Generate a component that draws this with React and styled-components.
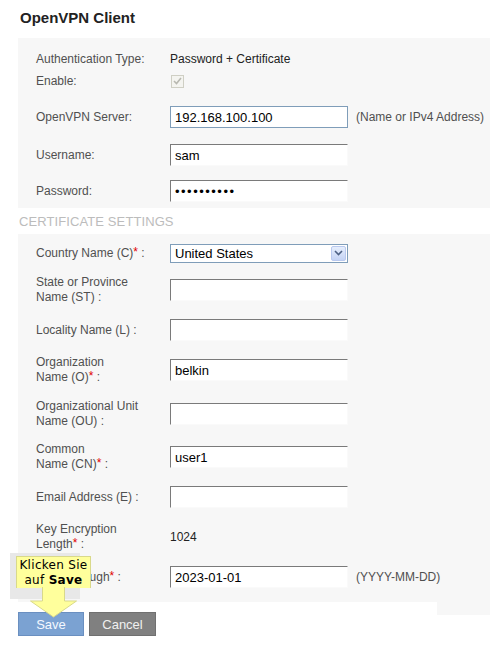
import styled, { createGlobalStyle } from "styled-components";

const GlobalStyle = createGlobalStyle`
    body {
        margin: 0;
        background: #fff;
        font-family: "Liberation Sans", Arial, sans-serif;
    }
`;

const App = () => {
    return (
        <Page>
            <GlobalStyle />
            <Title>OpenVPN Client</Title>

            <Panel $mt={10} $pt={10} $pb={6}>
                <Row $h={22}>
                    <Label>Authentication Type:</Label>
                    <Value>Password + Certificate</Value>
                </Row>
                <Row $h={22}>
                    <Label>Enable:</Label>
                    <Check>
                        <svg width="9" height="8" viewBox="0 0 9 8">
                            <path d="M1 4 L3.5 6.5 L8 1" fill="none" stroke="#b8b8b0" strokeWidth="1.6" />
                        </svg>
                    </Check>
                </Row>
                <Row $h={22} $mt={14}>
                    <Label>OpenVPN Server:</Label>
                    <Input $focus defaultValue="192.168.100.100" />
                    <Hint>(Name or IPv4 Address)</Hint>
                </Row>
                <Row $h={22} $mt={16}>
                    <Label>Username:</Label>
                    <Input defaultValue="sam" />
                </Row>
                <Row $h={22} $mt={14}>
                    <Label>Password:</Label>
                    <Input $secret type="password" defaultValue="xxxxxxxxxx" />
                </Row>
            </Panel>

            <SectionTitle>CERTIFICATE SETTINGS</SectionTitle>

            <Panel $mt={0} $pt={8} $pb={14}>
                <Row $h={22}>
                    <Label>Country Name (C)<Req>*</Req> :</Label>
                    <Select>
                        <span>United States</span>
                        <SelectArrow>
                            <svg width="9" height="6" viewBox="0 0 9 6">
                                <path d="M1 1 L4.5 4.5 L8 1" fill="none" stroke="#4d6185" strokeWidth="1.6" />
                            </svg>
                        </SelectArrow>
                    </Select>
                </Row>
                <Row $h={30} $mt={11}>
                    <Label>State or Province<br />Name (ST) :</Label>
                    <Input />
                </Row>
                <Row $h={22} $mt={14}>
                    <Label>Locality Name (L) :</Label>
                    <Input />
                </Row>
                <Row $h={30} $mt={14}>
                    <Label>Organization<br />Name (O)<Req>*</Req> :</Label>
                    <Input defaultValue="belkin" />
                </Row>
                <Row $h={30} $mt={14}>
                    <Label>Organizational Unit<br />Name (OU) :</Label>
                    <Input />
                </Row>
                <Row $h={30} $mt={13}>
                    <Label>Common<br />Name (CN)<Req>*</Req> :</Label>
                    <Input defaultValue="user1" />
                </Row>
                <Row $h={22} $mt={14}>
                    <Label>Email Address (E) :</Label>
                    <Input />
                </Row>
                <Row $h={30} $mt={14}>
                    <Label>Key Encryption<br />Length<Req>*</Req> :</Label>
                    <Value>1024</Value>
                </Row>
                <Row $h={22} $mt={14}>
                    <Label>Valid Through<Req>*</Req> :</Label>
                    <Input defaultValue="2023-01-01" />
                    <Hint>(YYYY-MM-DD)</Hint>
                </Row>
            </Panel>

            <ButtonBar>
                <Button $primary>Save</Button>
                <Button>Cancel</Button>
                <Filler />
            </ButtonBar>

            <Callout>
                <Shadow />
                <Bubble>
                    Klicken Sie<br />
                    auf <b>Save</b>
                </Bubble>
                <Arrow width="48" height="31" viewBox="0 0 48 31">
                    <path d="M12.5 0 L34.5 0 L34.5 14 L46.5 14 L23.5 30 L0.5 14 L12.5 14 Z" fill="#ffff9c" stroke="#d9d98a" strokeWidth="1" />
                    <rect x="13" y="0" width="21" height="2" fill="#ffff9c" />
                </Arrow>
            </Callout>
        </Page>
    );
};

export default App;

const Page = styled.div`
    position: relative;
    width: 497px;
    height: 648px;
    padding-top: 8px;
    box-sizing: border-box;
`;

const Title = styled.div`
    padding-left: 20px;
    height: 20px;
    line-height: 20px;
    font-size: 15px;
    font-weight: 700;
    color: #222;
`;

const Panel = styled.div`
    margin: ${p => p.$mt}px 0 0 18px;
    width: 472px;
    background: #f7f7f7;
    padding: ${p => p.$pt}px 0 ${p => p.$pb}px 18px;
    box-sizing: border-box;
`;

const SectionTitle = styled.div`
    margin-left: 19px;
    height: 26px;
    line-height: 28px;
    font-size: 13px;
    color: #bcbcbc;
    letter-spacing: 0.1px;
`;

const Row = styled.div`
    display: grid;
    grid-template-columns: 134px 178px auto;
    align-items: center;
    height: ${p => p.$h}px;
    margin-top: ${p => p.$mt || 0}px;
`;

const Label = styled.div`
    font-size: 12px;
    line-height: 15px;
    color: #505050;
`;

const Req = styled.span`
    color: #e00000;
    position: relative;
    top: -1px;
`;

const Value = styled.div`
    font-size: 12px;
    color: #222;
`;

const Hint = styled.div`
    margin-left: 8px;
    font-size: 12px;
    color: #505050;
    white-space: nowrap;
`;

const Check = styled.div`
    width: 11px;
    height: 11px;
    margin-left: 1px;
    border: 1px solid #cfcfc4;
    background: #f4f4f0;
    display: flex;
    align-items: center;
    justify-content: center;
`;

const Input = styled.input`
    width: 178px;
    height: 22px;
    box-sizing: border-box;
    padding: 0 4px;
    font-family: "Liberation Sans", Arial, sans-serif;
    font-size: 13px;
    letter-spacing: ${p => p.$secret ? "1.5px" : "0"};
    color: #000;
    background: #fff;
    outline: none;
    border: 1px solid;
    border-color: ${p => p.$focus ? "#7f9db9" : "#7a7a7a #fafafa #fafafa #7a7a7a"};
`;

const Select = styled.div`
    width: 178px;
    height: 19px;
    box-sizing: border-box;
    border: 1px solid #7f9db9;
    background: #fff;
    display: flex;
    align-items: center;
    justify-content: space-between;
    padding: 0 1px 0 4px;
    font-size: 13px;
    color: #000;
`;

const SelectArrow = styled.div`
    width: 15px;
    height: 15px;
    box-sizing: border-box;
    border: 1px solid #b9c9ef;
    border-radius: 2px;
    background: linear-gradient(#e6eefc, #c4d3f5);
    display: flex;
    align-items: center;
    justify-content: center;
`;

const ButtonBar = styled.div`
    display: flex;
    align-items: flex-start;
    gap: 5px;
    margin-left: 18px;
    width: 472px;
    height: 34px;
`;

const Button = styled.div`
    margin-top: 10px;
    width: ${p => p.$primary ? 66 : 67}px;
    height: 24px;
    box-sizing: border-box;
    display: flex;
    align-items: center;
    justify-content: center;
    font-size: 13px;
    color: ${p => p.$primary ? "#f4f8ff" : "#f0f0f0"};
    background: ${p => p.$primary ? "#7ba2d2" : "#808080"};
    border: 1px solid ${p => p.$primary ? "#6a8fc0" : "#707070"};
`;

const Filler = styled.div`
    margin-left: auto;
    width: 53px;
    height: 13px;
    background: #f7f7f7;
`;

const Callout = styled.div`
    position: absolute;
    left: 16px;
    top: 556px;
    width: 76px;
    height: 62px;
`;

const Shadow = styled.div`
    position: absolute;
    left: -6px;
    top: -3px;
    width: 70px;
    height: 46px;
    background: #e8e8e8;
`;

const Bubble = styled.div`
    position: relative;
    width: 75px;
    height: 32px;
    box-sizing: border-box;
    background: #ffff9c;
    border: 1px solid #d9d98a;
    border-bottom: none;
    text-align: center;
    white-space: nowrap;
    font-family: "DejaVu Sans", sans-serif;
    font-size: 12px;
    line-height: 15px;
    padding-top: 1px;
    letter-spacing: 0.3px;
    color: #000;
    & b {
        font-weight: 700;
    }
`;

const Arrow = styled.svg`
    position: absolute;
    left: 14px;
    top: 31px;
    display: block;
`;
